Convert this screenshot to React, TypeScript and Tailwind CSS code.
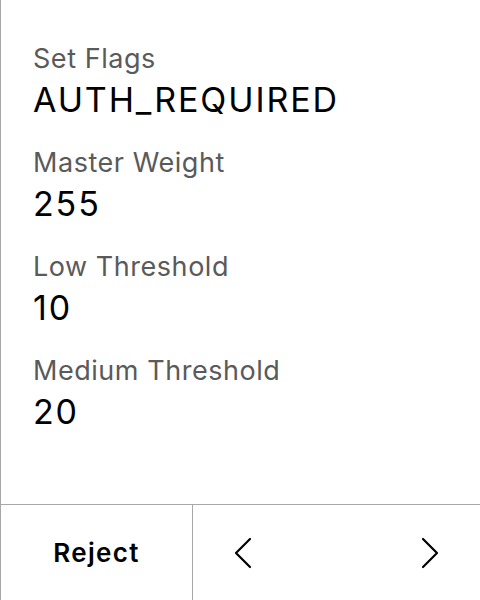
const rows = [
  { label: "Set Flags", value: "AUTH_REQUIRED" },
  { label: "Master Weight", value: "255" },
  { label: "Low Threshold", value: "10" },
  { label: "Medium Threshold", value: "20" },
];

const Chevron = ({ dir }: { dir: "left" | "right" }) => (
  <svg width="18" height="32" viewBox="0 0 18 32" fill="none" stroke="#000" strokeWidth="2.2" strokeLinecap="round" strokeLinejoin="round">
    {dir === "left" ? <polyline points="16,2 2,16 16,30" /> : <polyline points="2,2 16,16 2,30" />}
  </svg>
);

export default function App() {
  return (
    <div className="w-[480px] h-[600px] flex flex-col bg-white border-l border-[#a8a8a8] font-['Inter','Liberation_Sans',sans-serif]">
      <div className="flex-1 flex flex-col gap-[27px] pt-[43px] pl-8">
        {rows.map((r) => (
          <div key={r.label} className="flex flex-col gap-[5px]">
            <span className="text-[27px] leading-8 tracking-[0.02em] text-[#5a5a5a]">{r.label}</span>
            <span className="text-[34px] leading-10 tracking-[0.055em] text-black">{r.value}</span>
          </div>
        ))}
      </div>

      <div className="h-24 flex border-t border-[#a8a8a8]">
        <button type="button" className="w-[192px] flex items-center justify-center border-r border-[#a8a8a8] text-[26px] font-semibold tracking-[0.05em] text-black">
          Reject
        </button>
        <div className="flex-1 flex items-center justify-between px-[41px]">
          <button type="button"><Chevron dir="left" /></button>
          <button type="button"><Chevron dir="right" /></button>
        </div>
      </div>
    </div>
  );
}
